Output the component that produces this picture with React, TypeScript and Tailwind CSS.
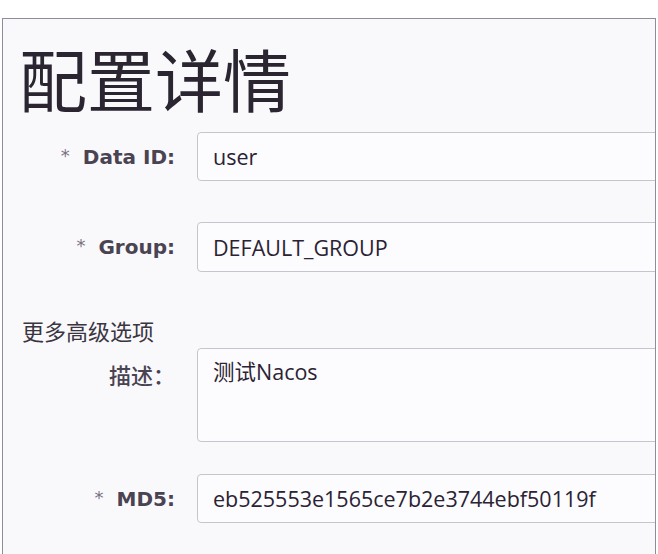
import React from 'react';

const labelFont = { fontFamily: '"DejaVu Sans", "Noto Sans CJK SC", sans-serif' };
const valueFont = { fontFamily: '"Open Sans", "Noto Sans CJK SC", sans-serif' };
const cjkFont = { fontFamily: '"Noto Sans CJK SC", "Noto Sans", sans-serif' };

const Label: React.FC<{ text: string; required?: boolean; cjk?: boolean }> = ({ text, required, cjk }) => (
    <div className="w-[172px] shrink-0 text-right text-[20px] text-[#4a4352]" style={cjk ? cjkFont : labelFont}>
        {required && <span className="relative -top-[2px] mr-[13px] text-[18px] font-normal text-[#7a7280]">*</span>}
        <span className={cjk ? 'text-[22px] font-medium' : 'font-bold'}>{text}</span>
    </div>
);

const Field: React.FC<{ label: string; value: string; required?: boolean; h: string; mt: string }> = ({ label, value, required, h, mt }) => (
    <div className={`flex items-center ${mt}`}>
        <Label text={label} required={required} />
        <input
            readOnly
            value={value}
            className={`ml-[22px] w-[560px] shrink-0 ${h} rounded-[4px] border border-[#c6c5cd] bg-[#fcfcfe] pl-[15px] text-[21.5px] text-[#2b2233] outline-none`}
            style={valueFont}
        />
    </div>
);

const App: React.FC = () => {
    return (
        <div className="h-[554px] w-[658px] overflow-hidden bg-white">
            <div className="ml-[2px] mt-[18px] h-[536px] w-[654px] overflow-hidden border border-b-0 border-[#8e8d99] bg-[#f9f9fc]">
                <h1 className="mt-[27px] h-[64px] pl-[16px] text-[68px] font-normal leading-[64px] text-[#2a2530]" style={cjkFont}>
                    配置详情
                </h1>
                <Field label="Data ID:" value="user" required h="h-[49px]" mt="mt-[22px]" />
                <Field label="Group:" value="DEFAULT_GROUP" required h="h-[50px]" mt="mt-[41px]" />
                <div className="mt-[44px] h-[28px] pl-[19px] text-[22px] leading-[28px] text-[#3a3540]" style={cjkFont}>
                    更多高级选项
                </div>
                <div className="mt-[4px] flex items-start">
                    <div className="pt-[10px]">
                        <Label text="描述：" cjk />
                    </div>
                    <textarea
                        readOnly
                        value="测试Nacos"
                        className="ml-[22px] h-[94px] w-[560px] shrink-0 resize-none rounded-[4px] border border-[#c6c5cd] bg-[#fcfcfe] pl-[15px] pt-[9px] text-[21.5px] leading-[28px] text-[#2b2233] outline-none"
                        style={valueFont}
                    />
                </div>
                <Field label="MD5:" value="eb525553e1565ce7b2e3744ebf50119f" required h="h-[49px]" mt="mt-[32px]" />
            </div>
        </div>
    );
};

export default App;
